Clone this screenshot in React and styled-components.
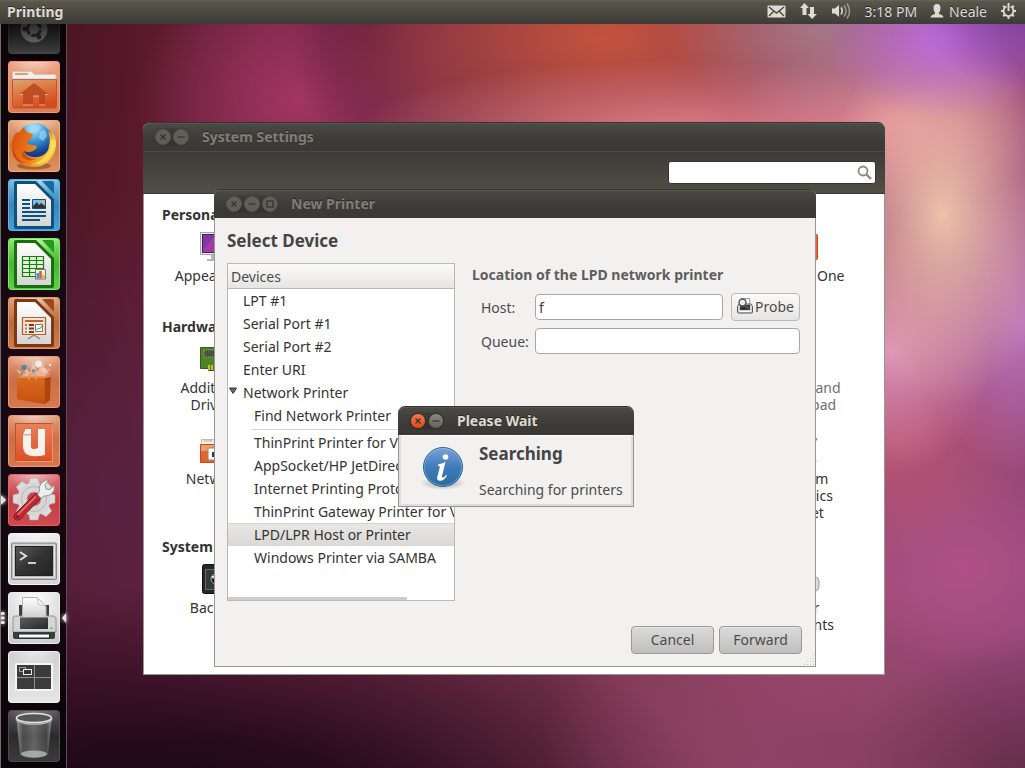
import React from "react";
import styled, { createGlobalStyle, css } from "styled-components";

const GlobalStyle = createGlobalStyle`
  * { box-sizing: border-box; }
  html, body { margin: 0; padding: 0; }
  body, button, input {
    font-family: "Noto Sans", "Open Sans", "Liberation Sans", sans-serif;
    font-size: 14px;
  }
`;

const titleGradient = "linear-gradient(#4b4a45, #3c3b37 60%, #3a3935)";

/* ---------- desktop ---------- */

const Desktop = styled.div`
  position: relative;
  display: flex;
  flex-direction: column;
  min-height: 100vh;
  overflow: hidden;
  background:
    radial-gradient(ellipse 110px 90px at 100% 0%, rgba(118, 58, 160, 0.9), rgba(118, 58, 160, 0) 100%),
    radial-gradient(ellipse 120px 80px at 92% 5%, rgba(190, 110, 225, 0.95), rgba(190, 110, 225, 0) 100%),
    radial-gradient(ellipse 150px 90px at 80% 4%, rgba(165, 130, 145, 0.8), rgba(165, 130, 145, 0) 100%),
    radial-gradient(ellipse 120px 190px at 92% 28%, rgba(242, 200, 172, 0.95), rgba(242, 200, 172, 0) 100%),
    radial-gradient(ellipse 100px 120px at 87% 46%, rgba(224, 150, 190, 0.9), rgba(224, 150, 190, 0) 100%),
    radial-gradient(ellipse 110px 150px at 100% 42%, rgba(190, 120, 195, 0.9), rgba(190, 120, 195, 0) 100%),
    radial-gradient(ellipse 160px 90px at 87% 16%, rgba(226, 140, 150, 0.9), rgba(226, 140, 150, 0) 100%),
    radial-gradient(ellipse 320px 70px at 66% 17%, rgba(228, 130, 140, 0.9), rgba(228, 130, 140, 0) 100%),
    radial-gradient(ellipse 280px 140px at 59% 5%, rgba(200, 84, 60, 0.95), rgba(200, 84, 60, 0) 100%),
    radial-gradient(ellipse 80px 130px at 36% 3%, rgba(96, 28, 62, 0.8), rgba(96, 28, 62, 0) 100%),
    radial-gradient(ellipse 160px 150px at 29% 13%, rgba(164, 54, 98, 0.95), rgba(164, 54, 98, 0) 100%),
    radial-gradient(ellipse 130px 120px at 88% 57%, rgba(190, 86, 112, 0.8), rgba(190, 86, 112, 0) 100%),
    radial-gradient(ellipse 120px 100px at 94% 74%, rgba(178, 82, 138, 0.9), rgba(178, 82, 138, 0) 100%),
    radial-gradient(ellipse 200px 150px at 102% 102%, rgba(92, 40, 68, 0.95), rgba(92, 40, 68, 0) 100%),
    radial-gradient(ellipse 300px 160px at 82% 98%, rgba(138, 64, 98, 0.95), rgba(138, 64, 98, 0) 100%),
    radial-gradient(ellipse 560px 260px at 18% 110%, rgba(18, 4, 16, 1), rgba(26, 6, 22, 0.85) 40%, rgba(40, 12, 34, 0) 100%),
    radial-gradient(ellipse 180px 320px at 11% 65%, rgba(88, 36, 72, 0.8), rgba(88, 36, 72, 0) 100%),
    linear-gradient(95deg, #401424 0%, #561828 12%, #6e2340 24%, #76324a 55%, #a04c72 80%, #96487c 100%);
`;

const TopPanel = styled.header`
  position: relative;
  z-index: 5;
  display: flex;
  align-items: center;
  justify-content: space-between;
  height: 24px;
  padding: 0 8px 2px 7px;
  color: #dfdbd2;
  background: linear-gradient(#65624f, #57554b 10%, #3c3b37);
  text-shadow: 0 -1px 0 rgba(0, 0, 0, 0.5);
`;

const AppName = styled.span`
  font-weight: 700;
`;

const Indicators = styled.div`
  display: flex;
  align-items: center;
  gap: 13px;

  svg { display: block; }
`;

const UserMenu = styled.span`
  display: flex;
  align-items: center;
  gap: 5px;
`;

const Launcher = styled.nav`
  display: flex;
  flex-direction: column;
  align-items: center;
  gap: 7px;
  width: 67px;
  min-height: calc(100vh - 24px);
  border-left: 1px solid #6b6f70;
  border-right: 1px solid #5c5359;
  background: linear-gradient(#0c0307, #1a0912 40%, #13060f 80%, #0a0408);
`;

const Tile = styled.button`
  position: relative;
  flex: none;
  width: 52px;
  height: 52px;
  padding: 0;
  border: 0;
  border-radius: 4px;
  background:
    radial-gradient(ellipse 26px 16px at 50% 0, rgba(255, 255, 255, ${(p) => p.$shine ?? 0.5}), rgba(255, 255, 255, 0)),
    ${(p) => p.$fill};
  box-shadow: inset 0 0 0 1px ${(p) => p.$edge};

  svg { display: block; }
`;

const HalfTile = styled.div`
  position: relative;
  display: flex;
  align-items: flex-end;
  flex: none;
  height: 30px;
  overflow: hidden;

  &::after {
    content: "";
    position: absolute;
    inset: 0;
    background: linear-gradient(rgba(0, 0, 0, 0.7), rgba(0, 0, 0, 0.05));
    pointer-events: none;
  }
`;

const Marker = styled.svg`
  position: absolute;
  top: 20px;
  ${(p) => (p.$side === "left" ? "left: -7px;" : "right: -6px;")}
  filter: drop-shadow(0 0 2px #fff);
`;

/* ---------- windows ---------- */

const Window = styled.section`
  position: absolute;
  z-index: ${(p) => p.$level};
  left: ${(p) => p.$x}px;
  top: ${(p) => p.$y}px;
  width: ${(p) => p.$w}px;
  min-height: ${(p) => p.$h}px;
  display: flex;
  flex-direction: column;
  margin: 0;
  padding: 0;
  border: 1px solid #98968f;
  border-top-color: #34332f;
  border-radius: 7px 7px 0 0;
  background: ${(p) => p.$bg};
  color: #3c3c3c;
`;

const TitleBar = styled.header`
  display: flex;
  align-items: center;
  height: 28px;
  flex: none;
  margin: 0 -1px;
  padding: 0 12px;
  gap: 13px;
  border-radius: 6px 6px 0 0;
  background: ${titleGradient};
  box-shadow: inset 0 1px 0 rgba(255, 255, 255, 0.07);
`;

const TitleText = styled.h2`
  margin: 0;
  font-size: 14px;
  font-weight: 700;
  line-height: 20px;
  color: ${(p) => (p.$active ? "#dfdbd2" : "#807d78")};
  text-shadow: 0 -1px 0 rgba(0, 0, 0, 0.4);
`;

const Controls = styled.div`
  display: flex;
  gap: 2px;
  border-radius: 9px;
  background: rgba(0, 0, 0, 0.12);
  box-shadow: 0 0 0 1px rgba(0, 0, 0, 0.08);
`;

const Control = styled.button`
  width: 16px;
  height: 16px;
  padding: 0;
  border: 1px solid ${(p) => (p.$active ? "#33322e" : "#56544e")};
  border-radius: 50%;
  background: ${(p) => (p.$hot ? "linear-gradient(#f4794c, #df4b12)" : p.$active ? "linear-gradient(#8b887e, #63615a)" : "#605e58")};

  svg { display: block; }
`;

function ControlButton({ kind, active }) {
  const glyph = {
    close: <path d="M4.500 4.500l5 5M9.500 4.500l-5 5" />,
    minimize: <path d="M3.500 7h7" />,
    maximize: <rect x="4" y="4" width="6" height="6" />,
  }[kind];
  return (
    <Control type="button" aria-label={kind} $active={active} $hot={active && kind === "close"}>
      <svg width="14" height="14" viewBox="0 0 14 14" fill="none" stroke="#33322e" strokeWidth="1.200">{glyph}</svg>
    </Control>
  );
}

function Bar({ title, kinds, active }) {
  return (
    <TitleBar>
      <Controls>
        {kinds.map((k) => <ControlButton key={k} kind={k} active={active} />)}
      </Controls>
      <TitleText $active={active}>{title}</TitleText>
    </TitleBar>
  );
}

/* ---------- system settings ---------- */

const Toolbar = styled.div`
  display: flex;
  justify-content: flex-end;
  align-items: center;
  height: 43px;
  padding: 0 9px;
  margin: 0 -1px;
  border-top: 1px solid #4a4944;
  border-bottom: 1px solid #3a3935;
  background: linear-gradient(#3c3b37, #524f47);
`;

const SearchBox = styled.label`
  display: flex;
  align-items: center;
  width: 208px;
  height: 23px;
  padding-right: 3px;
  border: 1px solid #35342f;
  border-radius: 3px;
  background: #fff;
`;

const SearchInput = styled.input`
  flex: 1;
  min-width: 0;
  height: 20px;
  border: 0;
  outline: 0;
  background: transparent;
`;

const SettingsBody = styled.div`
  display: flex;
  flex-direction: column;
  gap: 16px;
  padding: 11px 21px 0 11px;
`;

const Category = styled.section`
  display: flex;
  flex-direction: column;
  gap: 6px;
`;

const CategoryTitle = styled.h3`
  margin: 0;
  padding-left: 7px;
  font-size: 14px;
  line-height: 20px;
  font-weight: 700;
  color: #333;
`;

const SettingsGrid = styled.div`
  display: grid;
  grid-template-columns: repeat(6, 1fr);
  grid-auto-rows: minmax(70px, auto);
  row-gap: 21px;
`;

const SettingsItem = styled.a`
  grid-column: ${(p) => p.$col};
  display: flex;
  flex-direction: column;
  align-items: center;
  gap: 4px;
  text-align: center;
  text-decoration: none;
  line-height: 17px;
  white-space: pre-line;
  color: ${(p) => (p.$dim ? "#6f6f6f" : "#333")};

  svg { display: block; }
`;

/* ---------- new printer ---------- */

const PrinterBody = styled.div`
  display: flex;
  flex-direction: column;
  flex: 1;
  padding: 10px 13px 12px 12px;
`;

const Heading = styled.h3`
  margin: 0;
  font-size: 17px;
  line-height: 26px;
  font-weight: 700;
  color: #454545;
`;

const Columns = styled.div`
  display: grid;
  grid-template-columns: 228px minmax(0, 1fr);
  column-gap: 17px;
  margin-top: 9px;
`;

const DeviceList = styled.div`
  display: flex;
  flex-direction: column;
  height: 338px;
  overflow: hidden;
  border: 1px solid #bbb9b4;
  background: #fff;
`;

const ListHeader = styled.div`
  flex: none;
  height: 25px;
  padding-left: 3px;
  line-height: 25px;
  color: #4c4c4c;
  border-bottom: 1px solid #bbb9b4;
  background: linear-gradient(#fbfbfa, #e6e5e3);
`;

const Tree = styled.ul`
  flex: 1;
  margin: 0;
  padding: 0;
  list-style: none;
`;

const TreeRow = styled.li`
  position: relative;
  height: 23px;
  padding-left: ${(p) => (p.$nested ? 26 : 15)}px;
  line-height: 23px;
  white-space: nowrap;
  color: #333;
  ${(p) => p.$selected && css`
    background: linear-gradient(#e9e8e6, #d9d8d5);
    box-shadow: inset 0 1px 0 #d3d2cf;
  `}
`;

const Expander = styled.svg`
  position: absolute;
  left: 0;
  top: 6px;
`;

const Divider = styled.li`
  height: 4px;
  padding-top: 2px;

  &::after {
    content: "";
    display: block;
    height: 1px;
    margin-left: 23px;
    background: #d8d6d3;
  }
`;

const ScrollThumb = styled.div`
  width: 79%;
  height: 3px;
  background: #cfcdc9;
`;

const Location = styled.form`
  display: flex;
  flex-direction: column;
  padding-right: 2px;
`;

const LocationTitle = styled.h4`
  margin: 0 0 3px;
  font-size: 14px;
  line-height: 24px;
  font-weight: 700;
  color: #5e5e5e;
`;

const Field = styled.div`
  display: flex;
  align-items: center;
  height: 34px;
  padding-left: 9px;

  label {
    flex: none;
    width: 54px;
    color: #4c4c4c;
  }
`;

const TextInput = styled.input`
  flex: 1;
  min-width: 0;
  height: 26px;
  padding: 0 3px;
  border: 1px solid #a9a7a2;
  border-radius: 4px;
  outline: 0;
  color: #3c3c3c;
  background: #fff;
`;

const Button = styled.button`
  display: flex;
  align-items: center;
  justify-content: center;
  gap: 2px;
  height: 28px;
  padding: 0 0 2px;
  color: #4c4c4c;
  border: 1px solid ${(p) => (p.$light ? "#bdbbb7" : "#9a9996")};
  border-radius: 4px;
  background: ${(p) => (p.$light ? "linear-gradient(#fafaf9, #e6e5e3)" : "linear-gradient(#dadada, #bfbfbf)")};
  width: ${(p) => (p.$light ? 69 : 83)}px;
  margin-left: ${(p) => (p.$light ? 8 : 0)}px;
  box-shadow: inset 0 1px 0 rgba(255, 255, 255, 0.4);
`;

const Actions = styled.footer`
  display: flex;
  justify-content: flex-end;
  gap: 5px;
  margin-top: auto;
`;

const Grip = styled.svg`
  position: absolute;
  right: 0;
  bottom: 0;
`;

/* ---------- please wait ---------- */

const WaitBody = styled.div`
  display: grid;
  grid-template-columns: 48px 1fr;
  column-gap: 12px;
  flex: 1;
  padding: 5px 8px 0 18px;
  border: 2px solid #dedddb;
  border-top: 1px solid #fff;
  background: #f2f1f0;

  svg { margin-top: 2px; }
`;

const WaitText = styled.div`
  display: flex;
  flex-direction: column;
  gap: 13px;
`;

const WaitMessage = styled.p`
  margin: 0;
  line-height: 20px;
  white-space: nowrap;
  color: #4c4c4c;
`;

/* ---------- launcher drawings ---------- */

const Art = ({ children }) => (
  <svg width="52" height="52" viewBox="0 0 52 52" aria-hidden="true">{children}</svg>
);

const DashArt = () => (
  <Art>
    <circle cx="26" cy="27" r="13.500" fill="#8b8b8b" />
    <circle cx="26" cy="27" r="6.500" fill="none" stroke="#333" strokeWidth="3" />
    <circle cx="16.500" cy="27" r="2.400" fill="#333" />
    <circle cx="31" cy="35" r="2.400" fill="#333" />
    <circle cx="31" cy="19" r="2.400" fill="#333" />
    <path d="M26 27L20 37M26 27h12M26 27L20 17" stroke="#8b8b8b" strokeWidth="1.500" />
  </Art>
);

const HomeArt = () => (
  <Art>
    <defs>
      <linearGradient id="folder" x1="0" y1="0" x2="0.400" y2="1">
        <stop offset="0" stopColor="#d7a877" />
        <stop offset="0.450" stopColor="#e07b44" />
        <stop offset="1" stopColor="#d64c1e" />
      </linearGradient>
    </defs>
    <path d="M4.500 18v-7.500h19l3 3H48V18z" fill="#f3efec" stroke="#cfc5bf" />
    <path d="M7 12h13v2H7z" fill="#e89a70" />
    <path d="M4.500 18.500h44v27q0 1.500-1.500 1.500H6q-1.500 0-1.500-1.500z" fill="url(#folder)" stroke="#b9572f" />
    <path d="M4.500 18.500h44" stroke="#b46a4a" />
    <path d="M26 22l14.500 11H37v11h-6V35h-6v9H15V33h-3.500z" fill="#b8481f" opacity="0.850" />
    <path d="M15 44h10M31 44h6M25 35h6M12 33.500h3M37 33.500h3" stroke="#f6c3a2" strokeWidth="0.800" />
  </Art>
);

const FirefoxArt = () => (
  <Art>
    <defs>
      <radialGradient id="globe" cx="0.450" cy="0.150" r="0.900">
        <stop offset="0" stopColor="#c9ecfb" />
        <stop offset="0.350" stopColor="#4fa8dc" />
        <stop offset="0.750" stopColor="#17509c" />
        <stop offset="1" stopColor="#0c2c6b" />
      </radialGradient>
      <linearGradient id="fox" x1="0" y1="0" x2="1" y2="0.300">
        <stop offset="0" stopColor="#d8480f" />
        <stop offset="0.550" stopColor="#ec7a16" />
        <stop offset="1" stopColor="#f8d23c" />
      </linearGradient>
    </defs>
    <ellipse cx="26" cy="46" rx="17" ry="3.500" fill="#7d3c1c" opacity="0.550" />
    <circle cx="27" cy="20" r="17" fill="url(#globe)" />
    <path d="M22 7q6-4 11-1l-3 6-5 2zM32 12l5-2 2 6-4 5-4-3z" fill="#9bd6f2" opacity="0.700" />
    <path d="M7 14q-5 9-3 18 4 14 20 15 12 1 19-9 6-8 5-17-1-6-5-10 1 4 1 7-1-5-4-7 3 8 1 14 0 6-5 10-7 5-14 2-5-2-6-6 5 2 9 0 3-2 4-4-1-2-5-2-3 0-5-2 0-3 4-4 1-2 2-5-4 0-6-2-3-2-3-5-3 2-4 5-3 0-5 2z" fill="url(#fox)" />
    <path d="M5 24q0 14 12 19-9-1-12-8zM14 30q4 9 14 9-9 4-14-3z" fill="#b8350b" opacity="0.600" />
    <path d="M42 19q3 12-7 19 11-3 13-16M38 35q-6 8-15 9 12 2 18-7" fill="#fbe36a" opacity="0.750" />
  </Art>
);

const DocumentArt = ({ id, dark, mid, children }) => (
  <Art>
    <defs>
      <linearGradient id={id} x1="0" y1="0" x2="0" y2="1">
        <stop offset="0" stopColor="#ffffff" />
        <stop offset="1" stopColor="#d4d4d4" />
      </linearGradient>
    </defs>
    <path d="M34 2h10q2 0 2 2v11z" fill={mid} />
    <path d="M8 2h20l18 18v28q0 2-2 2H8q-2 0-2-2V4q0-2 2-2z" fill={dark} />
    <path d="M9 5h18l16 16v26H9z" fill={`url(#${id})`} />
    {children}
  </Art>
);

const WriterArt = () => (
  <DocumentArt id="writer" dark="#0d527f" mid="#17699c">
    <path d="M14 21h8M14 25h8M14 29h8M14 33h24M14 37h24M14 41h18" stroke="#0d527f" strokeWidth="2" />
    <path d="M24.500 20.500h13v9h-13z" fill="#7cc0ea" stroke="#0d527f" />
    <path d="M25 29v-2l4-4 2 3 2-2 4 3v2z" fill="#333" />
    <circle cx="35.500" cy="22.500" r="1.500" fill="#f2b82a" />
  </DocumentArt>
);

const CalcArt = () => (
  <DocumentArt id="calc" dark="#17700c" mid="#26991a">
    <path d="M14.500 18.500h21v20h-21zM21.500 18v21M28.500 18v21M14 22.500h22M14 26.500h22M14 30.500h22M14 34.500h22" fill="#dff3d8" stroke="#1c7a12" strokeWidth="1.200" />
    <path d="M27.500 31.500h10v9.500h-10z" fill="#eee" stroke="#777" />
    <path d="M28.500 35h2.500v5.500h-2.500z" fill="#3f97dc" />
    <path d="M31.200 33h2.600v7.500h-2.600z" fill="#d9622a" />
    <path d="M34 37h2.700v3.500H34z" fill="#e9b91f" />
  </DocumentArt>
);

const ImpressArt = () => (
  <DocumentArt id="impress" dark="#7f3611" mid="#9c4a1c">
    <path d="M14.500 20.500h23v17h-23z" fill="#f3e5dc" stroke="#b95c26" strokeWidth="1.200" />
    <path d="M17 24h18" stroke="#c0622b" strokeWidth="2" />
    <path d="M17 28h2M17 31.500h2M17 35h2" stroke="#d0743c" strokeWidth="2" />
    <path d="M21 28h5M21 31.500h5M21 35h5" stroke="#7f3611" strokeWidth="2" />
    <path d="M27.500 27.500h7v7h-7z" fill="#fff" stroke="#777" />
    <path d="M28.500 33l2-2 1 1 2.500-3" fill="none" stroke="#2b9a2b" />
    <path d="M26 38l-6 4M26 38l6 4" stroke="#888" strokeWidth="1.500" />
  </DocumentArt>
);

const SoftwareArt = () => (
  <Art>
    <defs>
      <linearGradient id="bag" x1="0" y1="0" x2="0" y2="1">
        <stop offset="0" stopColor="#d9691f" />
        <stop offset="1" stopColor="#c4500f" />
      </linearGradient>
    </defs>
    <path d="M14 22L8 13l9 5-1-9 6 8 3-12 4 11 7-9-1 9 8-4-6 9z" fill="#ffe6d2" opacity="0.550" />
    <circle cx="16" cy="11.500" r="2.800" fill="#5d83ab" />
    <circle cx="23" cy="9" r="2" fill="#c9b8ae" />
    <circle cx="30.500" cy="8" r="3.400" fill="#e9ece8" />
    <circle cx="36" cy="14" r="2.600" fill="#f2c7b5" />
    <circle cx="25.500" cy="15" r="2" fill="#7694b0" />
    <circle cx="13.500" cy="18" r="1.800" fill="#8a8f90" />
    <circle cx="42" cy="9" r="1.200" fill="#f7e3d5" />
    <circle cx="40" cy="18" r="1.500" fill="#cfa38e" />
    <path d="M8.700 21.700h28l-.2 26.500L9 43.300z" fill="url(#bag)" />
    <path d="M36.700 21.900l6-1.200-.7 23.500-5.500 4z" fill="#b0450c" />
    <path d="M8.700 21.700l4-1.500h28l2 .5-6 1.200z" fill="#e68a48" />
    <path d="M21 24v-4q0-1.500 1.500-1.500h4Q28 18.500 28 20v4" fill="none" stroke="#e9974e" strokeWidth="1.600" />
  </Art>
);

const UbuntuOneArt = () => (
  <Art>
    <defs>
      <linearGradient id="one" x1="0" y1="0" x2="0" y2="1">
        <stop offset="0" stopColor="#e8805a" />
        <stop offset="1" stopColor="#e05023" />
      </linearGradient>
    </defs>
    <path d="M7.500 8.500h37v37h-37z" fill="url(#one)" stroke="#c5502b" />
    <path d="M8.500 46.500h36v-37" fill="none" stroke="#f2a585" strokeWidth="0.800" />
    <path d="M15 19.500l2.500-5.500H23v17q0 3 2.500 3t4.500-1V14h7v26q-5 1.200-10.500 1.200Q15 41.200 15 31z" fill="#f5f1ee" />
    <path d="M15 19.800h8" stroke="#e07a52" strokeWidth="0.900" />
  </Art>
);

const teeth = [0, 45, 90, 135, 180, 225, 270, 315];

const SettingsArt = () => (
  <Art>
    <g transform="translate(26 25)">
      {teeth.map((a) => (
        <path key={a} d="M-4-21h8l1.500 6h-11z" fill="#dcdcdc" stroke="#a8a8a8" strokeWidth="0.600" transform={`rotate(${a})`} />
      ))}
      <circle r="16.500" fill="#d6d6d6" />
      <circle r="12.500" fill="none" stroke="#b5b5b5" />
      <circle r="7" fill="#cc4248" stroke="#aaa" />
    </g>
    <path d="M7.500 39.500L28 19l5 5L12.500 45Q9.500 47.500 7 45T7.500 39.500z" fill="#bd2a30" stroke="#7f1a1e" />
    <path d="M10 40.500L28 22.500" stroke="#e8797d" strokeWidth="1.500" />
    <circle cx="9.500" cy="43" r="1.300" fill="#7f1a1e" />
    <path d="M29.500 20.500l2-3q-1-6 3-9.500 3-2.500 6.500-2l-4 4.500 1 4.500 4 .5 4-4.500q1.500 5-2 8.500-3.500 3-8 2.500l-3 2.500z" fill="#eef0ee" stroke="#878d87" strokeWidth="0.900" />
  </Art>
);

const TerminalArt = () => (
  <Art>
    <defs>
      <linearGradient id="term" x1="0" y1="0" x2="1" y2="1">
        <stop offset="0" stopColor="#5a5a5a" />
        <stop offset="0.500" stopColor="#333" />
        <stop offset="1" stopColor="#222" />
      </linearGradient>
    </defs>
    <rect x="3.500" y="10" width="45" height="36.500" rx="1" fill="#b9b9b9" stroke="#8b8b8b" />
    <rect x="5.500" y="12" width="41" height="32.500" fill="none" stroke="#e6e6e6" />
    <rect x="7.500" y="13.500" width="37" height="29" fill="url(#term)" stroke="#222" />
    <path d="M12 19l6 4-6 4" fill="none" stroke="#e0e0e0" strokeWidth="2" />
    <path d="M20 30h8" stroke="#e0e0e0" strokeWidth="1.800" />
  </Art>
);

const PrinterArt = () => (
  <Art>
    <defs>
      <linearGradient id="sheet" x1="0" y1="0" x2="0" y2="1">
        <stop offset="0" stopColor="#fff" />
        <stop offset="1" stopColor="#cfcfcf" />
      </linearGradient>
      <linearGradient id="tray" x1="0" y1="0" x2="1" y2="1">
        <stop offset="0" stopColor="#5b5e60" />
        <stop offset="1" stopColor="#26282a" />
      </linearGradient>
    </defs>
    <path d="M11 13h4v12h-4zM37 13h4v12h-4z" fill="#3c4042" />
    <path d="M5 40V26q0-2 2-2h38q2 0 3 2v14z" fill="#d3d5d5" stroke="#909494" />
    <path d="M14.500 5.500H29l9 9V26H14.500z" fill="url(#sheet)" stroke="#b3b3b3" />
    <path d="M29 5.500l1 7 8 2z" fill="#f4f4f4" stroke="#b3b3b3" strokeWidth="0.700" />
    <path d="M12 25.500h28V37H12z" fill="url(#tray)" />
    <path d="M5 40h42v5q0 2-2 2H7q-2 0-2-2z" fill="#3a3e40" />
    <path d="M10.500 42h31v4h-31z" fill="#fafafa" stroke="#222" />
    <path d="M42 35.500h3v1.500h-3z" fill="#6fc93a" />
  </Art>
);

const WorkspaceArt = () => (
  <Art>
    <rect x="7" y="12" width="38" height="28" rx="1" fill="#f6f6f6" />
    <rect x="9" y="14" width="34" height="24" fill="#3b3b3b" />
    <path d="M26.500 14v24M9 26.500h34" stroke="#8f8f8f" />
    <rect x="11.500" y="16.500" width="6" height="4" fill="none" stroke="#999" />
    <rect x="15.500" y="18.500" width="8" height="5" fill="#333" stroke="#eee" />
  </Art>
);

const TrashArt = () => (
  <Art>
    <defs>
      <linearGradient id="bin" x1="0" y1="0" x2="1" y2="0">
        <stop offset="0" stopColor="#aaa" stopOpacity="0.800" />
        <stop offset="0.200" stopColor="#777" stopOpacity="0.400" />
        <stop offset="0.500" stopColor="#999" stopOpacity="0.500" />
        <stop offset="0.850" stopColor="#666" stopOpacity="0.400" />
        <stop offset="1" stopColor="#aaa" stopOpacity="0.800" />
      </linearGradient>
    </defs>
    <path d="M8.500 9l3.500 35q3 4 14 4t14-4l3.500-35z" fill="url(#bin)" />
    <ellipse cx="26" cy="44" rx="13" ry="3.500" fill="#b5b9b5" opacity="0.800" />
    <ellipse cx="26" cy="8" rx="17.500" ry="4.500" fill="#555" stroke="#e3e3e3" strokeWidth="1.600" />
    <path d="M8 9q2 5 18 5t18-5" fill="none" stroke="#b8b8b8" strokeWidth="1.500" />
  </Art>
);

const orange = "linear-gradient(#e5a07c, #c8714a 45%, #d8784e)";
const orangeEdge = "#ec9a74";
const silver = "radial-gradient(circle at 50% 20%, #fafafa, #c6c8c8)";

const launcherItems = [
  { name: "Home Folder", art: HomeArt, fill: "linear-gradient(#eda282, #df7a52)", edge: "#f09b76" },
  { name: "Firefox", art: FirefoxArt, fill: "linear-gradient(#e3a880, #cf7b48 50%, #dc9362)", edge: "#efab7c" },
  { name: "LibreOffice Writer", art: WriterArt, fill: "linear-gradient(#78bde6, #3a86b8 50%, #4a9fd6)", edge: "#62b4e8" },
  { name: "LibreOffice Calc", art: CalcArt, fill: "linear-gradient(#8aea70, #4ab437 50%, #60cf4a)", edge: "#7cea62" },
  { name: "LibreOffice Impress", art: ImpressArt, fill: "linear-gradient(#e0a37c, #b56a40 50%, #ce7e50)", edge: "#e0976a" },
  { name: "Ubuntu Software Center", art: SoftwareArt, fill: orange, edge: orangeEdge },
  { name: "Ubuntu One", art: UbuntuOneArt, fill: orange, edge: orangeEdge },
  { name: "System Settings", art: SettingsArt, fill: "linear-gradient(#e07a80, #c23e44 50%, #d04a50)", edge: "#e2646a", left: "arrow" },
  { name: "Terminal", art: TerminalArt, fill: "linear-gradient(#ebebeb, #d5d5d5)", edge: "#f4f4f4" },
  { name: "Printing", art: PrinterArt, fill: silver, edge: "#eceeee", left: "ticks", right: true },
  { name: "Workspace Switcher", art: WorkspaceArt, fill: "linear-gradient(#cfcfd0, #e6e6e6)", edge: "#f2f2f2" },
  { name: "Trash", art: TrashArt, fill: "linear-gradient(#565458, #2c2b2c 50%, #3c3c3c)", edge: "#4e4c4e", shine: 0.25 },
];

function LauncherItem({ item }) {
  const Drawing = item.art;
  return (
    <Tile type="button" aria-label={item.name} $fill={item.fill} $edge={item.edge} $shine={item.shine}>
      <Drawing />
      {item.left && (
        <Marker $side="left" width="5" height="12" viewBox="0 0 5 12" fill="#e6e3e4">
          {item.left === "arrow" ? <path d="M0 1l5 5-5 5z" /> : <path d="M0 0h3l1 1.500-1 1.500H0zM0 4.500h3L4 6 3 7.500H0zM0 9h3l1 1.500L3 12H0z" />}
        </Marker>
      )}
      {item.right && (
        <Marker $side="right" width="4" height="12" viewBox="0 0 4 12" fill="#e6e3e4">
          <path d="M4 1v10L0 6z" />
        </Marker>
      )}
    </Tile>
  );
}

/* ---------- settings drawings ---------- */

const Pic = ({ children }) => (
  <svg width="32" height="32" viewBox="0 0 32 32" aria-hidden="true">{children}</svg>
);

const MonitorPic = () => (
  <Pic>
    <rect x="2.500" y="1.500" width="29" height="22" fill="#e8e8e8" stroke="#a5a5a5" />
    <rect x="4.500" y="3.500" width="25" height="18" fill="#a43aa6" stroke="#4a1c5c" />
    <path d="M5 4h13L5 18z" fill="#6b3b95" opacity="0.700" />
    <path d="M13 24h6v4h4v2H9v-2h4z" fill="#b5b5b5" />
  </Pic>
);

const OnePic = () => (
  <Pic>
    <rect x="1.500" y="3.500" width="28" height="25" rx="1" fill="#ec6331" stroke="#d0481a" />
  </Pic>
);

const CardPic = () => (
  <Pic>
    <path d="M2.500 4.500h29v21h-4v2h-17v-2h-8z" fill="#4f8424" stroke="#355d16" />
    <rect x="6" y="7" width="13" height="7" fill="#4b5148" stroke="#9fae7a" strokeDasharray="1 1" />
    <path d="M11 22v5M14 22v5M17 22v5M20 22v5" stroke="#e6d24a" strokeWidth="1.500" />
  </Pic>
);

const TouchpadPic = () => (
  <Pic><rect x="4" y="8" width="22" height="18" rx="2" fill="#c8c8c8" /></Pic>
);

const NetworkPic = () => (
  <Pic>
    <path d="M3.500 5.500h12l2 3h13V12h-27z" fill="#f6f2ee" stroke="#c4bbb4" />
    <path d="M6 7h8" stroke="#e39a75" />
    <path d="M2.500 10.500h28v18h-28z" fill="#e4652c" stroke="#c04b1b" />
    <path d="M3 11h27v6H3z" fill="#f0b48a" opacity="0.700" />
    <rect x="10" y="14" width="14" height="12" rx="1" fill="#fff" stroke="#888" />
    <path d="M14 23v-5h2v-1h2v1h2v5z" fill="#333" />
  </Pic>
);

const TabletPic = () => (
  <Pic>
    <path d="M8 20L26 3l3 2-7 10zM4 28h24l-2-8" fill="#eee" stroke="#777" />
  </Pic>
);

const SafePic = () => (
  <Pic>
    <rect x="4.500" y="1.500" width="27" height="29" rx="2" fill="#23272a" stroke="#0f1112" />
    <rect x="7.500" y="6.500" width="20" height="20" fill="#33383a" stroke="#676b6d" />
    <circle cx="18" cy="16" r="5" fill="#15181a" stroke="#aaa" />
    <circle cx="15" cy="14" r="1.500" fill="#ddd" />
  </Pic>
);

const UsersPic = () => (
  <Pic>
    <path d="M5 28V17q0-3 5-3h17q4 0 4 5v4q0 4-3 5z" fill="#dcdcdc" stroke="#999" />
    <circle cx="14" cy="8" r="6" fill="#e5e5e5" stroke="#999" />
  </Pic>
);

const categories = [
  { title: "Personal", items: [
    { label: "Appearance", col: 1, pic: MonitorPic },
    { label: "Ubuntu One", col: 6, pic: OnePic },
  ] },
  { title: "Hardware", items: [
    { label: "Additional\nDrivers", col: 1, pic: CardPic },
    { label: "Mouse and\nTouchpad", col: 6, pic: TouchpadPic, dim: true },
    { label: "Network", col: 1, pic: NetworkPic },
    { label: "Wacom\nGraphics\nTablet", col: 6, pic: TabletPic },
  ] },
  { title: "System", items: [
    { label: "Backup", col: 1, pic: SafePic },
    { label: "User\nAccounts", col: 6, pic: UsersPic },
  ] },
];

const devices = [
  { label: "LPT #1" },
  { label: "Serial Port #1" },
  { label: "Serial Port #2" },
  { label: "Enter URI" },
  { label: "Network Printer", expander: true },
  { label: "Find Network Printer", nested: true, divider: true },
  { label: "ThinPrint Printer for VMware", nested: true },
  { label: "AppSocket/HP JetDirect", nested: true },
  { label: "Internet Printing Protocol (ipp)", nested: true },
  { label: "ThinPrint Gateway Printer for VMware", nested: true },
  { label: "LPD/LPR Host or Printer", nested: true, selected: true },
  { label: "Windows Printer via SAMBA", nested: true },
];

const ProbeIcon = () => (
  <svg width="16" height="16" viewBox="0 0 16 16" aria-hidden="true">
    <path d="M4.500 6V.5h8L13 6" fill="#fff" stroke="#999" />
    <path d="M.5 8.500L2 6h12l1.500 2.500V14q0 1-1 1h-13q-1 0-1-1z" fill="#d8d8d8" stroke="#555" />
    <path d="M3 7h10v5H3z" fill="#333" />
    <path d="M2.500 13.500h11" stroke="#fff" />
    <circle cx="5.500" cy="4.500" r="3.500" fill="#e8ecef" stroke="#555" strokeWidth="1.400" />
    <path d="M8 7.500l5 4" stroke="#555" strokeWidth="2" />
  </svg>
);

const InfoIcon = () => (
  <svg width="48" height="48" viewBox="0 0 48 48" aria-hidden="true">
    <defs>
      <linearGradient id="info" x1="0" y1="0" x2="0" y2="1">
        <stop offset="0" stopColor="#7aa3da" />
        <stop offset="0.500" stopColor="#3f7cb9" />
        <stop offset="1" stopColor="#2a6c9e" />
      </linearGradient>
      <radialGradient id="infoShade">
        <stop offset="0" stopColor="#000" stopOpacity="0.350" />
        <stop offset="1" stopColor="#000" stopOpacity="0" />
      </radialGradient>
    </defs>
    <ellipse cx="24" cy="40" rx="23" ry="7" fill="url(#infoShade)" />
    <circle cx="24" cy="24" r="19.500" fill="url(#info)" stroke="#2f659d" />
    <circle cx="24" cy="24" r="18.500" fill="none" stroke="#fff" strokeOpacity="0.250" />
    <circle cx="26.500" cy="14" r="2.800" fill="#fff" />
    <path d="M19 21.500q4-1 7.500-2.500l-3.500 14q-.5 2 1 1.500t3-2.500l1 .8q-3 5-7 5-3.500 0-2.700-4l2.500-9.500q.3-1.500-2-1.800z" fill="#fff" />
  </svg>
);

export default function App() {
  return (
    <Desktop>
      <GlobalStyle />
      <TopPanel>
        <AppName>Printing</AppName>
        <Indicators>
          <svg width="19" height="13" viewBox="0 0 19 13" aria-label="Messages">
            <rect x="0.500" y="0.500" width="18" height="12" rx="1" fill="#dfdbd2" />
            <path d="M2 2l7.500 6L17 2M2 11l5-5M17 11l-5-5" fill="none" stroke="#45443e" strokeWidth="1.400" />
          </svg>
          <svg width="19" height="18" viewBox="0 0 19 18" fill="#dfdbd2" aria-label="Network">
            <path d="M5.500 1L10 6H7.500v7h-4V6H1zM13 17l-4.500-5H11V5h4v7h3z" />
          </svg>
          <svg width="21" height="18" viewBox="0 0 21 18" aria-label="Sound">
            <path d="M1 6.500h3L8 3v12l-4-3.500H1z" fill="#dfdbd2" />
            <path d="M10 5.500q2.500 3.500 0 7" fill="none" stroke="#dfdbd2" strokeWidth="1.600" />
            <path d="M13 3.500q4 5.500 0 11M16 1.500q5 7.500 0 15" fill="none" stroke="#97948b" strokeWidth="1.600" />
          </svg>
          <span>3:18 PM</span>
          <UserMenu>
            <svg width="14" height="14" viewBox="0 0 14 14" fill="#dfdbd2" aria-hidden="true">
              <path d="M7 0q3.500 0 3.500 4 0 3-1.500 4.500v1.500q4 .8 4.500 3.500H.5Q1 10.800 5 10V8.500Q3.500 7 3.500 4 3.500 0 7 0z" />
            </svg>
            <span>Neale</span>
          </UserMenu>
          <svg width="17" height="18" viewBox="0 0 17 18" fill="none" stroke="#dfdbd2" aria-label="Session">
            <path d="M6.500 4.500a5 5 0 1 0 4 0" strokeWidth="1.900" />
            <path d="M8.500 1v8" strokeWidth="1.900" />
            <path d="M8.500 14.500v2.500M1 9h2M14 9h2M3.200 3.700l1.500 1.500M13.800 3.700l-1.500 1.500M3.200 14.300l1.500-1.500M13.800 14.300l-1.500-1.500" strokeWidth="2" />
          </svg>
        </Indicators>
      </TopPanel>

      <Launcher aria-label="Launcher">
        <HalfTile>
          <Tile type="button" aria-label="Dash Home" $fill="linear-gradient(#222, #444)" $edge="#4a4a4a" $shine={0}>
            <DashArt />
          </Tile>
        </HalfTile>
        {launcherItems.map((item) => <LauncherItem key={item.name} item={item} />)}
      </Launcher>

      <Window $x={143} $y={122} $w={742} $h={553} $bg="#fff" $level={1}>
        <Bar title="System Settings" kinds={["close", "minimize"]} />
        <Toolbar>
          <SearchBox>
            <SearchInput type="search" aria-label="Search settings" />
            <svg width="15" height="15" viewBox="0 0 15 15" fill="none" stroke="#8c8984" aria-hidden="true">
              <circle cx="6" cy="6" r="4.500" strokeWidth="1.800" />
              <path d="M9.500 9.500L14 14" strokeWidth="2.400" />
            </svg>
          </SearchBox>
        </Toolbar>
        <SettingsBody>
          {categories.map((category) => (
            <Category key={category.title}>
              <CategoryTitle>{category.title}</CategoryTitle>
              <SettingsGrid>
                {category.items.map(({ label, col, dim, pic: Drawing }) => (
                  <SettingsItem key={label} href="#" $col={col} $dim={dim}>
                    <Drawing />
                    <span>{label}</span>
                  </SettingsItem>
                ))}
              </SettingsGrid>
            </Category>
          ))}
        </SettingsBody>
      </Window>

      <Window $x={214} $y={189} $w={602} $h={478} $bg="#f2f1f0" $level={2}>
        <Bar title="New Printer" kinds={["close", "minimize", "maximize"]} />
        <PrinterBody>
          <Heading>Select Device</Heading>
          <Columns>
            <DeviceList>
              <ListHeader id="devices-label">Devices</ListHeader>
              <Tree role="tree" aria-labelledby="devices-label">
                {devices.map((device) => (
                  <React.Fragment key={device.label}>
                    <TreeRow role="treeitem" aria-selected={!!device.selected} $nested={device.nested} $selected={device.selected}>
                      {device.expander && (
                        <Expander width="10" height="8" viewBox="0 0 10 8" aria-hidden="true">
                          <path d="M1.500 1h7L5 6.500z" fill="#666" stroke="#333" />
                        </Expander>
                      )}
                      {device.label}
                    </TreeRow>
                    {device.divider && <Divider role="separator" />}
                  </React.Fragment>
                ))}
              </Tree>
              <ScrollThumb />
            </DeviceList>
            <Location>
              <LocationTitle>Location of the LPD network printer</LocationTitle>
              <Field>
                <label htmlFor="host">Host:</label>
                <TextInput id="host" type="text" defaultValue="f" />
                <Button type="button" $light><ProbeIcon />Probe</Button>
              </Field>
              <Field>
                <label htmlFor="queue">Queue:</label>
                <TextInput id="queue" type="text" />
              </Field>
            </Location>
          </Columns>
          <Actions>
            <Button type="button">Cancel</Button>
            <Button type="button">Forward</Button>
          </Actions>
        </PrinterBody>
        <Grip width="12" height="12" viewBox="0 0 12 12" fill="#c9c7c4" aria-hidden="true">
          <path d="M10 1h1v1h-1zM7 4h1v1h-1zM10 4h1v1h-1zM4 7h1v1h-1zM7 7h1v1h-1zM10 7h1v1h-1zM1 10h1v1h-1zM4 10h1v1h-1zM7 10h1v1h-1zM10 10h1v1h-1z" />
        </Grip>
      </Window>

      <Window as="dialog" open $x={398} $y={406} $w={236} $h={101} $bg="#f2f1f0" $level={3}>
        <Bar title="Please Wait" kinds={["close", "minimize"]} active />
        <WaitBody>
          <InfoIcon />
          <WaitText>
            <Heading>Searching</Heading>
            <WaitMessage>Searching for printers</WaitMessage>
          </WaitText>
        </WaitBody>
      </Window>
    </Desktop>
  );
}
